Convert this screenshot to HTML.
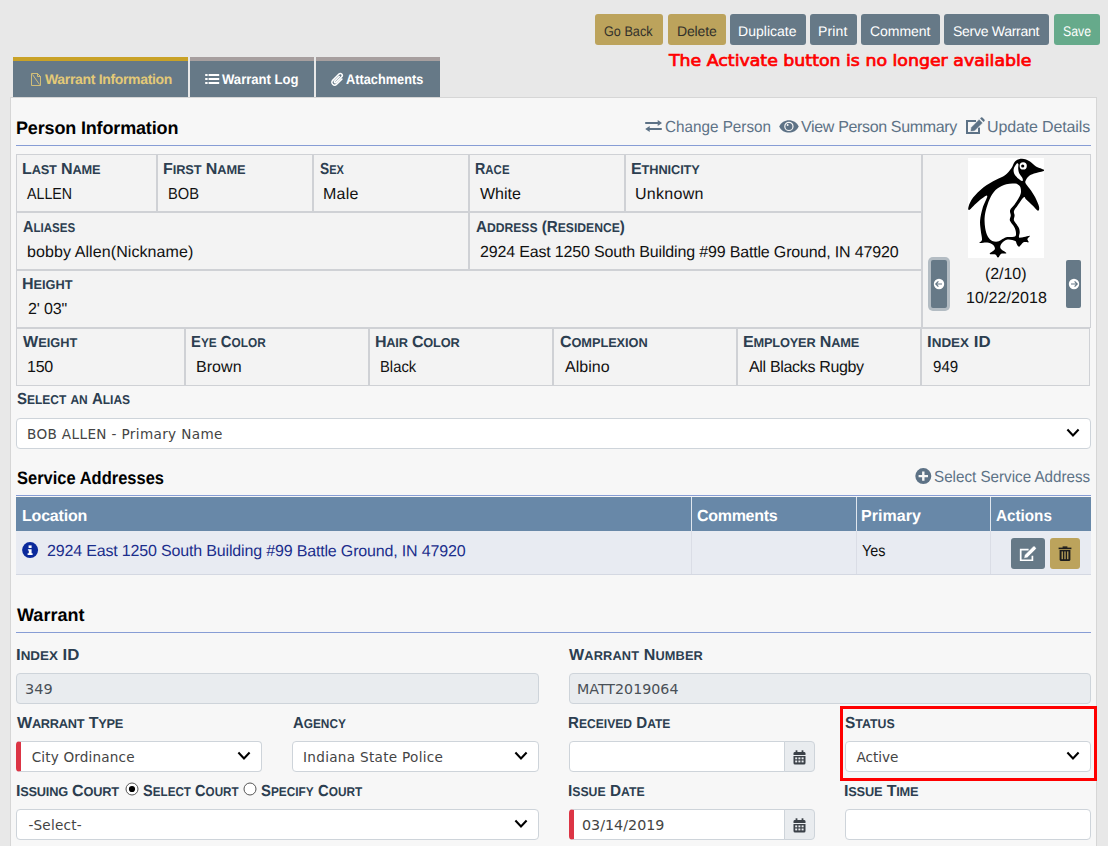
<!DOCTYPE html>
<html lang="en"><head><meta charset="utf-8"><title>Warrant Information</title>
<style>
html,body{margin:0;padding:0}
html{width:1108px;height:846px;overflow:hidden}
body{width:1108px;height:846px;overflow:hidden;background:#e8e8e8;position:relative;font-family:'Liberation Sans', sans-serif}
.t{position:absolute;white-space:nowrap;line-height:20px;height:20px;transform-origin:0 15.5px}
.w,.l{display:inline-block;text-transform:uppercase;font-size:.8em}
.w::first-letter{font-size:1.25em}
</style></head><body>
<div style="position:absolute;left:595px;top:14px;width:68px;height:31px;box-sizing:border-box;background:#bca35c;border-radius:3px"></div>
<div style="position:absolute;left:668px;top:14px;width:58px;height:31px;box-sizing:border-box;background:#bca35c;border-radius:3px"></div>
<div style="position:absolute;left:730px;top:14px;width:76px;height:31px;box-sizing:border-box;background:#667987;border-radius:3px"></div>
<div style="position:absolute;left:810px;top:14px;width:47px;height:31px;box-sizing:border-box;background:#667987;border-radius:3px"></div>
<div style="position:absolute;left:861px;top:14px;width:79px;height:31px;box-sizing:border-box;background:#667987;border-radius:3px"></div>
<div style="position:absolute;left:944px;top:14px;width:105px;height:31px;box-sizing:border-box;background:#667987;border-radius:3px"></div>
<div style="position:absolute;left:1054px;top:14px;width:46px;height:31px;box-sizing:border-box;background:#66aa8b;border-radius:3px"></div>
<div style="position:absolute;left:10px;top:97px;width:1087px;height:749px;box-sizing:border-box;background:#f7f7f7;border:1px solid #d6d6d6;border-bottom:0"></div>
<div style="position:absolute;left:13px;top:57px;width:175px;height:40px;box-sizing:border-box;background:#667987;border-top:4px solid #c9a227"></div>
<div style="position:absolute;left:190px;top:57px;width:124px;height:40px;box-sizing:border-box;background:#667987;border-top:4px solid #a79f9f"></div>
<div style="position:absolute;left:316px;top:57px;width:124px;height:40px;box-sizing:border-box;background:#667987;border-top:4px solid #a79f9f"></div>
<div style="position:absolute;left:16px;top:145px;width:1075px;height:1px;box-sizing:border-box;background:#879dd5"></div>
<div style="position:absolute;left:16px;top:154px;width:141px;height:58px;box-sizing:border-box;background:#f3f3f3;border:1px solid #cfd1d5"></div>
<div style="position:absolute;left:157px;top:154px;width:156px;height:58px;box-sizing:border-box;background:#f3f3f3;border:1px solid #cfd1d5"></div>
<div style="position:absolute;left:313px;top:154px;width:156px;height:58px;box-sizing:border-box;background:#f3f3f3;border:1px solid #cfd1d5"></div>
<div style="position:absolute;left:469px;top:154px;width:156px;height:58px;box-sizing:border-box;background:#f3f3f3;border:1px solid #cfd1d5"></div>
<div style="position:absolute;left:625px;top:154px;width:297px;height:58px;box-sizing:border-box;background:#f3f3f3;border:1px solid #cfd1d5"></div>
<div style="position:absolute;left:16px;top:212px;width:453px;height:58px;box-sizing:border-box;background:#f3f3f3;border:1px solid #cfd1d5"></div>
<div style="position:absolute;left:469px;top:212px;width:453px;height:58px;box-sizing:border-box;background:#f3f3f3;border:1px solid #cfd1d5"></div>
<div style="position:absolute;left:16px;top:270px;width:906px;height:58px;box-sizing:border-box;background:#f3f3f3;border:1px solid #cfd1d5"></div>
<div style="position:absolute;left:16px;top:328px;width:169px;height:58px;box-sizing:border-box;background:#f3f3f3;border:1px solid #cfd1d5"></div>
<div style="position:absolute;left:185px;top:328px;width:184px;height:58px;box-sizing:border-box;background:#f3f3f3;border:1px solid #cfd1d5"></div>
<div style="position:absolute;left:369px;top:328px;width:184px;height:58px;box-sizing:border-box;background:#f3f3f3;border:1px solid #cfd1d5"></div>
<div style="position:absolute;left:553px;top:328px;width:184px;height:58px;box-sizing:border-box;background:#f3f3f3;border:1px solid #cfd1d5"></div>
<div style="position:absolute;left:737px;top:328px;width:184px;height:58px;box-sizing:border-box;background:#f3f3f3;border:1px solid #cfd1d5"></div>
<div style="position:absolute;left:921px;top:328px;width:169px;height:58px;box-sizing:border-box;background:#f3f3f3;border:1px solid #cfd1d5"></div>
<div style="position:absolute;left:922px;top:154px;width:169px;height:174px;box-sizing:border-box;background:#f3f3f3;border:1px solid #cfd1d5"></div>
<div style="position:absolute;left:968px;top:158px;width:76px;height:100px;box-sizing:border-box;background:#fff"></div>
<div style="position:absolute;left:931px;top:260px;width:16px;height:48px;box-sizing:border-box;background:#667987;border-radius:2px;box-shadow:0 0 0 3px #b3bcc3"></div>
<div style="position:absolute;left:1066px;top:260px;width:15px;height:48px;box-sizing:border-box;background:#667987;border-radius:2px"></div>
<div style="position:absolute;left:16px;top:418px;width:1075px;height:31px;box-sizing:border-box;background:#fff;border:1px solid #ced4da;border-radius:4px;"></div>
<div style="position:absolute;left:16px;top:495px;width:1075px;height:1px;box-sizing:border-box;background:#879dd5"></div>
<div style="position:absolute;left:16px;top:497px;width:1075px;height:34px;box-sizing:border-box;background:#6888a8"></div>
<div style="position:absolute;left:16px;top:531px;width:1075px;height:44px;box-sizing:border-box;background:#e8ebf2;border-bottom:1px solid #d4d8e2"></div>
<div style="position:absolute;left:691px;top:497px;width:1px;height:34px;box-sizing:border-box;background:#dfe6ee"></div>
<div style="position:absolute;left:691px;top:531px;width:1px;height:43px;box-sizing:border-box;background:#dadde6"></div>
<div style="position:absolute;left:856px;top:497px;width:1px;height:34px;box-sizing:border-box;background:#dfe6ee"></div>
<div style="position:absolute;left:856px;top:531px;width:1px;height:43px;box-sizing:border-box;background:#dadde6"></div>
<div style="position:absolute;left:990px;top:497px;width:1px;height:34px;box-sizing:border-box;background:#dfe6ee"></div>
<div style="position:absolute;left:990px;top:531px;width:1px;height:43px;box-sizing:border-box;background:#dadde6"></div>
<div style="position:absolute;left:1011px;top:538px;width:34px;height:31px;box-sizing:border-box;background:#667987;border-radius:3px"></div>
<div style="position:absolute;left:1050px;top:538px;width:30px;height:31px;box-sizing:border-box;background:#bca35c;border-radius:3px"></div>
<div style="position:absolute;left:16px;top:632px;width:1075px;height:1px;box-sizing:border-box;background:#879dd5"></div>
<div style="position:absolute;left:16px;top:673px;width:523px;height:31px;box-sizing:border-box;background:#e9ecef;border:1px solid #ced4da;border-radius:4px;"></div>
<div style="position:absolute;left:569px;top:673px;width:522px;height:31px;box-sizing:border-box;background:#e9ecef;border:1px solid #ced4da;border-radius:4px;"></div>
<div style="position:absolute;left:16px;top:741px;width:246px;height:31px;box-sizing:border-box;background:#fff;border:1px solid #ced4da;border-radius:4px;border-left:5px solid #dc3545"></div>
<div style="position:absolute;left:292px;top:741px;width:247px;height:31px;box-sizing:border-box;background:#fff;border:1px solid #ced4da;border-radius:4px;"></div>
<div style="position:absolute;left:569px;top:741px;width:216px;height:31px;box-sizing:border-box;background:#fff;border:1px solid #ced4da;border-radius:4px;border-radius:4px 0 0 4px"></div>
<div style="position:absolute;left:784px;top:741px;width:31px;height:31px;box-sizing:border-box;background:#e9ecef;border:1px solid #ced4da;border-radius:4px;border-radius:0 4px 4px 0"></div>
<div style="position:absolute;left:845px;top:741px;width:246px;height:31px;box-sizing:border-box;background:#fff;border:1px solid #ced4da;border-radius:4px;"></div>
<div style="position:absolute;left:840px;top:706px;width:257px;height:75px;box-sizing:border-box;border:3px solid #ff0000"></div>
<div style="position:absolute;left:16px;top:809px;width:523px;height:31px;box-sizing:border-box;background:#fff;border:1px solid #ced4da;border-radius:4px;"></div>
<div style="position:absolute;left:569px;top:809px;width:216px;height:31px;box-sizing:border-box;background:#fff;border:1px solid #ced4da;border-radius:4px;border-radius:4px 0 0 4px;border-left:5px solid #dc3545"></div>
<div style="position:absolute;left:784px;top:809px;width:31px;height:31px;box-sizing:border-box;background:#e9ecef;border:1px solid #ced4da;border-radius:4px;border-radius:0 4px 4px 0"></div>
<div style="position:absolute;left:845px;top:809px;width:246px;height:31px;box-sizing:border-box;background:#fff;border:1px solid #ced4da;border-radius:4px;"></div>
<svg style="position:absolute;left:30px;top:72px" width="12" height="15" viewBox="0 0 12 15"><path d="M1.5,1.5 H7.5 L10.5,4.5 V13.5 H1.5 Z M7.5,1.5 V4.5 H10.5 M2.5,2.5 L9.5,12.5" fill="none" stroke="#e3c977" stroke-width="1" opacity=".85"/></svg>
<svg style="position:absolute;left:205px;top:73px" width="15" height="12" viewBox="0 0 15 12"><rect x="0.2" y="1" width="2.4" height="2" fill="#fff"/><rect x="3.6" y="1" width="10.6" height="2" fill="#fff"/><rect x="0.2" y="5" width="2.4" height="2" fill="#fff"/><rect x="3.6" y="5" width="10.6" height="2" fill="#fff"/><rect x="0.2" y="9" width="2.4" height="2" fill="#fff"/><rect x="3.6" y="9" width="10.6" height="2" fill="#fff"/></svg>
<svg style="position:absolute;left:330px;top:72px" width="15" height="15" viewBox="0 0 15 15"><g transform="rotate(45 7.5 7.5)" fill="none" stroke="#fff" stroke-width="1.55" stroke-linecap="round"><path d="M10.3,4.2 V11.5 A2.8,2.8 0 0 1 4.7,11.5 V2.6 A1.9,1.9 0 0 1 8.5,2.6 V10.6 A0.95,0.95 0 0 1 6.6,10.6 V4.2"/></g></svg>
<svg style="position:absolute;left:645px;top:120px" width="18" height="12" viewBox="0 0 18 12"><g fill="#5d7286"><path d="M0.2,2 H12.7 V0 L17,3 L12.7,6 V4 H0.2 Z"/><path d="M16.8,8 H4.7 V6 L0.2,9 L4.7,12 V10 H16.8 Z"/></g></svg>
<svg style="position:absolute;left:778.6px;top:119.6px" width="20" height="13" viewBox="0 0 20 13"><path d="M0.3,6.4 C3.6,-1.9 16.3,-1.9 19.6,6.4 C16.3,14.7 3.6,14.7 0.3,6.4 Z" fill="#5d7286"/><circle cx="9.9" cy="6.4" r="4.1" fill="none" stroke="#f7f7f7" stroke-width="1.2"/><circle cx="8.6" cy="5" r="1" fill="#f7f7f7"/></svg>
<svg style="position:absolute;left:965px;top:117.2px" width="20" height="17" viewBox="0 -1 20 17"><path d="M11,3 H2 V15 H14 V9.6" fill="none" stroke="#5d7286" stroke-width="2"/><path d="M5.4,13.6 L6,9.4 L14.1,1.3 L17.7,4.9 L9.6,13 Z" fill="#5d7286" stroke="#f7f7f7" stroke-width="0.5"/><path d="M15.1,0.4 L18.6,3.9 L19.5,3 Q20.1,2.3 19.4,1.6 L17.4,-0.4 Q16.7,-1 16,-0.4 Z" fill="#5d7286"/></svg>
<svg style="position:absolute;left:914.5px;top:468px" width="17" height="17" viewBox="0 0 17 17"><circle cx="8.3" cy="8.1" r="8" fill="#5d7286"/><path d="M3.6,8.1 H13 M8.3,3.4 V12.8" stroke="#f7f7f7" stroke-width="2.4"/></svg>
<svg style="position:absolute;left:22px;top:541.7px" width="17" height="17" viewBox="0 0 17 17"><circle cx="8.1" cy="8.1" r="8" fill="#0b2a9c"/><rect x="6.6" y="3.4" width="3" height="2.6" fill="#fff"/><path d="M5.9,7.2 H9.6 V11.3 H10.6 V12.9 H5.6 V11.3 H6.8 V8.6 H5.9 Z" fill="#fff"/></svg>
<svg style="position:absolute;left:1019px;top:545px" width="19" height="16" viewBox="0 -1 19 16"><path d="M9.6,3.7 H1.7 V14.3 H13.4 V9.8" fill="none" stroke="#fff" stroke-width="1.7"/><path d="M4.9,12.3 L5.6,9 L14.3,0.3 Q15,-0.2 15.6,0.3 L17,1.7 Q17.5,2.4 17,3 L8.2,11.7 Z" fill="#fff" stroke="#667987" stroke-width="0.5"/></svg>
<svg style="position:absolute;left:1058px;top:546px" width="14" height="16" viewBox="0 0 14 16"><g fill="#1d1d1d"><rect x="4.6" y="0.4" width="4.8" height="1.5"/><rect x="0.6" y="1.6" width="12.8" height="1.6"/><path d="M1.6,4 H12.4 V13.4 Q12.4,15 10.8,15 H3.2 Q1.6,15 1.6,13.4 Z"/></g><g fill="#bca35c"><rect x="3.6" y="5.4" width="1.3" height="7.8"/><rect x="6.35" y="5.4" width="1.3" height="7.8"/><rect x="9.1" y="5.4" width="1.3" height="7.8"/></g></svg>
<svg style="position:absolute;left:933.1px;top:278.1px" width="12" height="12" viewBox="0 0 12 12"><circle cx="6" cy="6" r="5.2" fill="#fff"/><path transform="translate(6 6)" d="M3,0 H-3 M-0.6,-2.6 L-3.2,0 L-0.6,2.6" fill="none" stroke="#667987" stroke-width="1.2"/></svg>
<svg style="position:absolute;left:1067.6px;top:278.2px" width="12" height="12" viewBox="0 0 12 12"><circle cx="6" cy="6" r="5.2" fill="#fff"/><path transform="translate(6 6)" d="M-3,0 H3 M0.6,-2.6 L3.2,0 L0.6,2.6" fill="none" stroke="#667987" stroke-width="1.2"/></svg>
<svg style="position:absolute;left:1065.4px;top:427px" width="16" height="12" viewBox="0 0 16 12"><path d="M2.4,2.6 L8,8.4 L13.6,2.6" fill="none" stroke="#000" stroke-width="2.1"/></svg>
<svg style="position:absolute;left:236.3px;top:750px" width="16" height="12" viewBox="0 0 16 12"><path d="M2.4,2.6 L8,8.4 L13.6,2.6" fill="none" stroke="#000" stroke-width="2.1"/></svg>
<svg style="position:absolute;left:513.4px;top:750px" width="16" height="12" viewBox="0 0 16 12"><path d="M2.4,2.6 L8,8.4 L13.6,2.6" fill="none" stroke="#000" stroke-width="2.1"/></svg>
<svg style="position:absolute;left:1065.4px;top:750px" width="16" height="12" viewBox="0 0 16 12"><path d="M2.4,2.6 L8,8.4 L13.6,2.6" fill="none" stroke="#000" stroke-width="2.1"/></svg>
<svg style="position:absolute;left:513.4px;top:818px" width="16" height="12" viewBox="0 0 16 12"><path d="M2.4,2.6 L8,8.4 L13.6,2.6" fill="none" stroke="#000" stroke-width="2.1"/></svg>
<svg style="position:absolute;left:793px;top:749.5px" width="13" height="15" viewBox="0 0 13 15"><path d="M0.5,3.4 Q0.5,2 2,2 H11 Q12.5,2 12.5,3.4 V5 H0.5 Z" fill="#3b4148"/><rect x="2.6" y="0.3" width="1.8" height="3" fill="#3b4148"/><rect x="8.6" y="0.3" width="1.8" height="3" fill="#3b4148"/><path d="M0.5,6 H12.5 V13 Q12.5,14.5 11,14.5 H2 Q0.5,14.5 0.5,13 Z" fill="#3b4148"/><rect x="2.2" y="7.4" width="2" height="1.9" fill="#e9ecef"/><rect x="2.2" y="10.5" width="2" height="1.9" fill="#e9ecef"/><rect x="5.4" y="7.4" width="2" height="1.9" fill="#e9ecef"/><rect x="5.4" y="10.5" width="2" height="1.9" fill="#e9ecef"/><rect x="8.6" y="7.4" width="2" height="1.9" fill="#e9ecef"/><rect x="8.6" y="10.5" width="2" height="1.9" fill="#e9ecef"/></svg>
<svg style="position:absolute;left:793px;top:817.5px" width="13" height="15" viewBox="0 0 13 15"><path d="M0.5,3.4 Q0.5,2 2,2 H11 Q12.5,2 12.5,3.4 V5 H0.5 Z" fill="#3b4148"/><rect x="2.6" y="0.3" width="1.8" height="3" fill="#3b4148"/><rect x="8.6" y="0.3" width="1.8" height="3" fill="#3b4148"/><path d="M0.5,6 H12.5 V13 Q12.5,14.5 11,14.5 H2 Q0.5,14.5 0.5,13 Z" fill="#3b4148"/><rect x="2.2" y="7.4" width="2" height="1.9" fill="#e9ecef"/><rect x="2.2" y="10.5" width="2" height="1.9" fill="#e9ecef"/><rect x="5.4" y="7.4" width="2" height="1.9" fill="#e9ecef"/><rect x="5.4" y="10.5" width="2" height="1.9" fill="#e9ecef"/><rect x="8.6" y="7.4" width="2" height="1.9" fill="#e9ecef"/><rect x="8.6" y="10.5" width="2" height="1.9" fill="#e9ecef"/></svg>
<svg style="position:absolute;left:124.6px;top:782.4px" width="14" height="14" viewBox="0 0 14 14"><circle cx="7" cy="7" r="6" fill="#fff" stroke="#555" stroke-width="1"/><circle cx="7" cy="7" r="3.1" fill="#000"/></svg>
<svg style="position:absolute;left:243.3px;top:782.4px" width="14" height="14" viewBox="0 0 14 14"><circle cx="7" cy="7" r="6" fill="#fff" stroke="#555" stroke-width="1"/></svg>
<svg style="position:absolute;left:968px;top:158px" width="76" height="100" viewBox="0 0 76 100"><rect width="76" height="100" fill="#fff"/><path d="M54.0,0.8C56.5,0.8 59.7,2.2 62.0,3.5C64.3,4.8 65.7,7.1 68.0,8.5C70.3,9.9 74.8,11.0 76.0,11.8C77.2,12.6 76.7,12.6 75.0,13.2C73.3,13.8 68.4,14.6 66.0,15.5C63.6,16.4 61.9,17.2 60.5,18.5C59.1,19.8 57.9,21.8 57.5,23.0C57.1,24.2 57.1,24.4 58.0,26.0C58.9,27.6 61.5,30.2 63.0,32.5C64.5,34.8 66.0,36.9 67.3,39.6C68.6,42.3 70.5,46.3 71.0,48.5C71.5,50.7 71.1,52.9 70.0,52.8C68.9,52.6 66.6,49.5 64.6,47.6C62.6,45.7 59.7,42.9 58.2,41.5C56.7,40.1 57.2,38.2 55.8,39.2C54.4,40.2 51.4,44.9 49.8,47.2C48.2,49.5 46.5,51.3 46.0,53.0C45.5,54.7 46.6,55.8 46.6,57.4C46.6,59.0 45.4,60.7 46.0,62.6C46.6,64.5 49.4,67.0 50.4,68.9C51.4,70.8 51.6,72.2 51.7,74.0C51.8,75.8 50.4,78.6 51.1,79.4C51.8,80.2 54.2,79.2 56.0,79.0C57.8,78.8 61.3,77.6 61.9,77.9C62.5,78.2 59.6,80.0 59.4,81.1C59.2,82.2 61.2,83.8 60.6,84.3C60.0,84.8 57.1,83.6 55.5,84.3C53.9,85.0 52.3,88.5 51.1,88.7C49.9,88.9 49.1,86.5 48.5,85.5C47.9,84.5 48.7,83.7 47.2,83.0C45.7,82.3 41.9,81.2 39.6,81.6C37.3,82.0 34.8,84.0 33.6,85.5C32.4,87.0 31.8,89.0 32.6,90.6C33.4,92.2 38.2,94.2 38.3,95.1C38.4,95.9 34.6,95.0 33.2,95.7C31.8,96.5 31.0,99.5 30.0,99.6C29.0,99.7 28.8,97.1 27.4,96.4C26.0,95.8 21.8,96.6 21.7,95.7C21.6,94.8 26.3,92.8 26.8,91.3C27.3,89.8 26.2,87.9 24.9,86.8C23.6,85.7 21.3,84.9 19.1,84.6C16.9,84.3 12.3,85.4 11.5,84.9C10.7,84.4 13.8,83.7 14.0,81.7C14.2,79.7 13.1,76.0 12.8,72.8C12.5,69.6 11.8,66.4 12.1,62.6C12.4,58.8 13.5,53.9 14.7,49.8C15.9,45.6 20.1,38.6 19.1,37.7C18.1,36.9 11.9,42.3 8.9,44.7C5.9,47.1 2.7,51.3 1.3,51.9C-0.1,52.5 -0.0,50.5 0.6,48.5C1.2,46.5 2.6,42.8 5.1,39.6C7.5,36.4 11.5,32.4 15.3,29.4C19.1,26.4 24.5,23.7 28.1,21.7C31.7,19.7 34.5,19.1 37.0,17.2C39.5,15.3 41.7,12.5 43.4,10.2C45.1,7.9 45.4,4.8 47.2,3.2C49.0,1.6 51.5,0.8 54.0,0.8Z" fill="#000"/><path d="M38.3,26.2C41.3,25.4 45.0,25.3 47.2,25.6C49.4,25.9 50.7,26.8 51.7,28.1C52.7,29.4 53.0,31.5 53.0,33.2C53.0,34.9 52.8,36.1 51.7,38.3C50.6,40.5 48.2,44.3 46.6,46.6C45.0,48.9 42.7,50.5 42.1,52.3C41.5,54.1 42.8,55.7 42.8,57.4C42.8,59.1 41.3,60.7 41.9,62.6C42.5,64.5 45.2,67.0 46.2,68.9C47.2,70.8 47.8,72.4 47.9,74.0C48.0,75.6 48.4,77.8 47.0,78.6C45.6,79.4 41.7,78.7 39.6,79.1C37.5,79.5 36.1,80.3 34.5,81.1C32.9,81.8 31.7,83.3 30.0,83.6C28.3,83.9 26.0,83.8 24.3,83.0C22.6,82.2 21.0,80.6 19.8,78.5C18.6,76.4 17.7,73.3 17.2,70.2C16.7,67.1 16.4,63.4 16.6,60.0C16.8,56.6 17.4,53.4 18.5,49.8C19.6,46.2 21.2,41.5 23.0,38.3C24.8,35.1 26.8,32.6 29.4,30.6C31.9,28.6 35.3,27.0 38.3,26.2Z" fill="#fff"/><path d="M48.6,5.8C47.8,6.7 45.8,9.5 45.6,11.5C45.4,13.5 45.9,15.7 47.3,17.6C48.7,19.5 52.7,22.5 53.9,23.0C55.1,23.5 55.0,21.7 54.6,20.4C54.2,19.1 51.9,17.0 51.2,15.3C50.5,13.6 50.3,11.7 50.2,10.2C50.1,8.7 50.7,6.9 50.4,6.2C50.1,5.5 49.4,4.9 48.6,5.8Z" fill="#fff"/><circle cx="55.2" cy="7.9" r="3.6" fill="#fff"/><circle cx="54.7" cy="8" r="1.6" fill="#000"/></svg>
<span class="t" style="left:604.20px;top:20.65px;font-size:14px;color:#33312b;transform:scaleX(0.9048) rotate(.03deg);">Go Back</span>
<span class="t" style="left:676.50px;top:20.65px;font-size:14px;color:#33312b;letter-spacing:-0.139px;transform:rotate(.03deg);">Delete</span>
<span class="t" style="left:738.10px;top:20.65px;font-size:14px;color:#fff;letter-spacing:0.025px;transform:rotate(.03deg);">Duplicate</span>
<span class="t" style="left:818.25px;top:20.65px;font-size:14px;color:#fff;letter-spacing:0.146px;transform:rotate(.03deg);">Print</span>
<span class="t" style="left:870.25px;top:20.65px;font-size:14px;color:#fff;letter-spacing:-0.051px;transform:rotate(.03deg);">Comment</span>
<span class="t" style="left:953.25px;top:20.65px;font-size:14px;color:#fff;letter-spacing:-0.280px;transform:rotate(.03deg);">Serve Warrant</span>
<span class="t" style="left:1062.85px;top:20.65px;font-size:14px;color:#fff;transform:scaleX(0.8796) rotate(.03deg);">Save</span>
<span class="t" style="left:668.88px;top:51.36px;font-size:16px;color:#ff0000;font-family:'DejaVu Sans', 'Liberation Sans', sans-serif;-webkit-text-stroke:0.7px #ff0000;transform:scaleX(1.0838);">The Activate button is no longer available</span>
<span class="t" style="left:45.40px;top:68.65px;font-size:14px;color:#e3c977;font-weight:700;letter-spacing:-0.329px;transform:rotate(.03deg);">Warrant Information</span>
<span class="t" style="left:222.00px;top:68.65px;font-size:14px;color:#fff;font-weight:700;transform:scaleX(0.9343) rotate(.03deg);">Warrant Log</span>
<span class="t" style="left:346.20px;top:68.65px;font-size:14px;color:#fff;font-weight:700;transform:scaleX(0.9113) rotate(.03deg);">Attachments</span>
<span class="t" style="left:15.60px;top:118.26px;font-size:18px;color:#000;font-weight:700;letter-spacing:-0.155px;transform:rotate(.03deg);">Person Information</span>
<span class="t" style="left:665.30px;top:116.96px;font-size:16px;color:#5d7286;transform:scaleX(0.9532) rotate(.03deg);">Change Person</span>
<span class="t" style="left:800.90px;top:116.96px;font-size:16px;color:#5d7286;letter-spacing:-0.342px;transform:rotate(.03deg);">View Person Summary</span>
<span class="t" style="left:987.30px;top:116.96px;font-size:16px;color:#5d7286;letter-spacing:-0.136px;transform:rotate(.03deg);">Update Details</span>
<span class="t" style="left:21.80px;top:158.96px;font-size:16px;color:#2c3e50;font-weight:700;letter-spacing:-0.152px;transform:rotate(.03deg);"><span class="w">Last</span> <span class="w">Name</span></span>
<span class="t" style="left:27.20px;top:183.96px;font-size:16px;color:#111;transform:scaleX(0.8884) rotate(.03deg);">ALLEN</span>
<span class="t" style="left:162.80px;top:158.96px;font-size:16px;color:#2c3e50;font-weight:700;letter-spacing:-0.096px;transform:rotate(.03deg);"><span class="w">First</span> <span class="w">Name</span></span>
<span class="t" style="left:167.68px;top:183.96px;font-size:16px;color:#111;transform:scaleX(0.9191) rotate(.03deg);">BOB</span>
<span class="t" style="left:319.80px;top:158.96px;font-size:16px;color:#2c3e50;font-weight:700;transform:scaleX(0.8622) rotate(.03deg);"><span class="w">Sex</span></span>
<span class="t" style="left:323.20px;top:183.96px;font-size:16px;color:#111;letter-spacing:0.200px;transform:rotate(.03deg);">Male</span>
<span class="t" style="left:474.91px;top:158.96px;font-size:16px;color:#2c3e50;font-weight:700;transform:scaleX(0.8946) rotate(.03deg);"><span class="w">Race</span></span>
<span class="t" style="left:480.00px;top:183.96px;font-size:16px;color:#111;transform:rotate(.03deg);">White</span>
<span class="t" style="left:630.80px;top:158.96px;font-size:16px;color:#2c3e50;font-weight:700;letter-spacing:-0.108px;transform:rotate(.03deg);"><span class="w">Ethnicity</span></span>
<span class="t" style="left:635.00px;top:183.96px;font-size:16px;color:#111;letter-spacing:0.297px;transform:rotate(.03deg);">Unknown</span>
<span class="t" style="left:22.80px;top:216.96px;font-size:16px;color:#2c3e50;font-weight:700;transform:scaleX(0.9036) rotate(.03deg);"><span class="w">Aliases</span></span>
<span class="t" style="left:26.80px;top:241.96px;font-size:16px;color:#111;letter-spacing:0.089px;transform:rotate(.03deg);">bobby Allen(Nickname)</span>
<span class="t" style="left:475.80px;top:216.96px;font-size:16px;color:#2c3e50;font-weight:700;transform:scaleX(0.9479) rotate(.03deg);"><span class="w">Address</span> <span class="w">(Residence</span>)</span>
<span class="t" style="left:480.40px;top:241.96px;font-size:16px;color:#111;letter-spacing:-0.166px;transform:rotate(.03deg);">2924 East 1250 South Building #99 Battle Ground, IN 47920</span>
<span class="t" style="left:21.80px;top:273.96px;font-size:16px;color:#2c3e50;font-weight:700;letter-spacing:-0.013px;transform:rotate(.03deg);"><span class="w">Height</span></span>
<span class="t" style="left:27.90px;top:298.96px;font-size:16px;color:#111;letter-spacing:-0.121px;transform:rotate(.03deg);">2&#x27; 03&quot;</span>
<span class="t" style="left:22.80px;top:331.96px;font-size:16px;color:#2c3e50;font-weight:700;letter-spacing:0.038px;transform:rotate(.03deg);"><span class="w">Weight</span></span>
<span class="t" style="left:26.90px;top:356.96px;font-size:16px;color:#111;letter-spacing:-0.258px;transform:rotate(.03deg);">150</span>
<span class="t" style="left:190.87px;top:331.96px;font-size:16px;color:#2c3e50;font-weight:700;transform:scaleX(0.9257) rotate(.03deg);"><span class="w">Eye</span> <span class="w">Color</span></span>
<span class="t" style="left:196.00px;top:356.96px;font-size:16px;color:#111;letter-spacing:0.057px;transform:rotate(.03deg);">Brown</span>
<span class="t" style="left:374.80px;top:331.96px;font-size:16px;color:#2c3e50;font-weight:700;letter-spacing:-0.218px;transform:rotate(.03deg);"><span class="w">Hair</span> <span class="w">Color</span></span>
<span class="t" style="left:379.88px;top:356.96px;font-size:16px;color:#111;transform:scaleX(0.9250) rotate(.03deg);">Black</span>
<span class="t" style="left:559.80px;top:331.96px;font-size:16px;color:#2c3e50;font-weight:700;letter-spacing:-0.081px;transform:rotate(.03deg);"><span class="w">Complexion</span></span>
<span class="t" style="left:564.90px;top:356.96px;font-size:16px;color:#111;letter-spacing:0.021px;transform:rotate(.03deg);">Albino</span>
<span class="t" style="left:742.80px;top:331.96px;font-size:16px;color:#2c3e50;font-weight:700;letter-spacing:-0.182px;transform:rotate(.03deg);"><span class="w">Employer</span> <span class="w">Name</span></span>
<span class="t" style="left:748.60px;top:356.96px;font-size:16px;color:#111;letter-spacing:-0.330px;transform:rotate(.03deg);">All Blacks Rugby</span>
<span class="t" style="left:926.75px;top:331.96px;font-size:16px;color:#2c3e50;font-weight:700;transform:scaleX(1.0509) rotate(.03deg);"><span class="w">Index</span> ID</span>
<span class="t" style="left:932.70px;top:356.96px;font-size:16px;color:#111;transform:scaleX(0.9433) rotate(.03deg);">949</span>
<span class="t" style="left:984.90px;top:263.96px;font-size:16px;color:#111;letter-spacing:-0.056px;transform:rotate(.03deg);">(2/10)</span>
<span class="t" style="left:965.60px;top:287.96px;font-size:16px;color:#111;letter-spacing:0.090px;transform:rotate(.03deg);">10/22/2018</span>
<span class="t" style="left:16.60px;top:388.96px;font-size:16px;color:#2c3e50;font-weight:700;transform:scaleX(0.9362) rotate(.03deg);"><span class="w">Select</span> <span class="l">an</span> <span class="w">Alias</span></span>
<span class="t" style="left:27.00px;top:423.79px;font-size:13.6px;color:#444;font-family:'DejaVu Sans', 'Liberation Sans', sans-serif;letter-spacing:0.358px;">BOB ALLEN - Primary Name</span>
<span class="t" style="left:16.60px;top:468.26px;font-size:18px;color:#000;font-weight:700;transform:scaleX(0.9163) rotate(.03deg);">Service Addresses</span>
<span class="t" style="left:934.30px;top:466.96px;font-size:16px;color:#5d7286;transform:scaleX(0.9493) rotate(.03deg);">Select Service Address</span>
<span class="t" style="left:21.70px;top:505.96px;font-size:16px;color:#fff;font-weight:700;letter-spacing:-0.201px;transform:rotate(.03deg);">Location</span>
<span class="t" style="left:696.60px;top:505.96px;font-size:16px;color:#fff;font-weight:700;letter-spacing:-0.300px;transform:rotate(.03deg);">Comments</span>
<span class="t" style="left:861.30px;top:505.96px;font-size:16px;color:#fff;font-weight:700;letter-spacing:0.066px;transform:rotate(.03deg);">Primary</span>
<span class="t" style="left:996.00px;top:505.96px;font-size:16px;color:#fff;font-weight:700;transform:scaleX(0.9526) rotate(.03deg);">Actions</span>
<span class="t" style="left:46.70px;top:540.96px;font-size:16px;color:#1b2e8c;letter-spacing:-0.166px;transform:rotate(.03deg);">2924 East 1250 South Building #99 Battle Ground, IN 47920</span>
<span class="t" style="left:862.30px;top:540.96px;font-size:16px;color:#111;transform:scaleX(0.9035) rotate(.03deg);">Yes</span>
<span class="t" style="left:16.60px;top:605.26px;font-size:18px;color:#000;font-weight:700;letter-spacing:0.023px;transform:rotate(.03deg);">Warrant</span>
<span class="t" style="left:15.65px;top:644.96px;font-size:16px;color:#2c3e50;font-weight:700;transform:scaleX(1.0475) rotate(.03deg);"><span class="w">Index</span> ID</span>
<span class="t" style="left:569.30px;top:644.96px;font-size:16px;color:#2c3e50;font-weight:700;letter-spacing:0.135px;transform:rotate(.03deg);"><span class="w">Warrant</span> <span class="w">Number</span></span>
<span class="t" style="left:24.63px;top:678.79px;font-size:13.6px;color:#495057;font-family:'DejaVu Sans', 'Liberation Sans', sans-serif;transform:scaleX(1.0653);">349</span>
<span class="t" style="left:576.65px;top:678.79px;font-size:13.6px;color:#495057;font-family:'DejaVu Sans', 'Liberation Sans', sans-serif;transform:scaleX(1.0470);">MATT2019064</span>
<span class="t" style="left:16.70px;top:712.96px;font-size:16px;color:#2c3e50;font-weight:700;letter-spacing:-0.242px;transform:rotate(.03deg);"><span class="w">Warrant</span> <span class="w">Type</span></span>
<span class="t" style="left:293.10px;top:712.96px;font-size:16px;color:#2c3e50;font-weight:700;transform:scaleX(0.9273) rotate(.03deg);"><span class="w">Agency</span></span>
<span class="t" style="left:568.36px;top:712.96px;font-size:16px;color:#2c3e50;font-weight:700;transform:scaleX(0.9447) rotate(.03deg);"><span class="w">Received</span> <span class="w">Date</span></span>
<span class="t" style="left:844.80px;top:712.96px;font-size:16px;color:#2c3e50;font-weight:700;transform:scaleX(0.9648) rotate(.03deg);"><span class="w">Status</span></span>
<span class="t" style="left:31.70px;top:746.79px;font-size:13.6px;color:#444;font-family:'DejaVu Sans', 'Liberation Sans', sans-serif;letter-spacing:0.157px;">City Ordinance</span>
<span class="t" style="left:303.00px;top:746.79px;font-size:13.6px;color:#444;font-family:'DejaVu Sans', 'Liberation Sans', sans-serif;letter-spacing:0.295px;">Indiana State Police</span>
<span class="t" style="left:856.50px;top:746.79px;font-size:13.6px;color:#444;font-family:'DejaVu Sans', 'Liberation Sans', sans-serif;letter-spacing:-0.060px;">Active</span>
<span class="t" style="left:16.00px;top:780.96px;font-size:16px;color:#2c3e50;font-weight:700;letter-spacing:-0.234px;transform:rotate(.03deg);"><span class="w">Issuing</span> <span class="w">Court</span></span>
<span class="t" style="left:142.90px;top:780.96px;font-size:16px;color:#2c3e50;font-weight:700;transform:scaleX(0.9114) rotate(.03deg);"><span class="w">Select</span> <span class="w">Court</span></span>
<span class="t" style="left:261.40px;top:780.96px;font-size:16px;color:#2c3e50;font-weight:700;transform:scaleX(0.9278) rotate(.03deg);"><span class="w">Specify</span> <span class="w">Court</span></span>
<span class="t" style="left:567.84px;top:780.96px;font-size:16px;color:#2c3e50;font-weight:700;transform:scaleX(0.9580) rotate(.03deg);"><span class="w">Issue</span> <span class="w">Date</span></span>
<span class="t" style="left:843.80px;top:780.96px;font-size:16px;color:#2c3e50;font-weight:700;letter-spacing:-0.188px;transform:rotate(.03deg);"><span class="w">Issue</span> <span class="w">Time</span></span>
<span class="t" style="left:28.40px;top:814.79px;font-size:13.6px;color:#444;font-family:'DejaVu Sans', 'Liberation Sans', sans-serif;letter-spacing:0.222px;">-Select-</span>
<span class="t" style="left:582.40px;top:814.79px;font-size:13.6px;color:#444;font-family:'DejaVu Sans', 'Liberation Sans', sans-serif;transform:scaleX(1.0522);">03/14/2019</span>
</body></html>
